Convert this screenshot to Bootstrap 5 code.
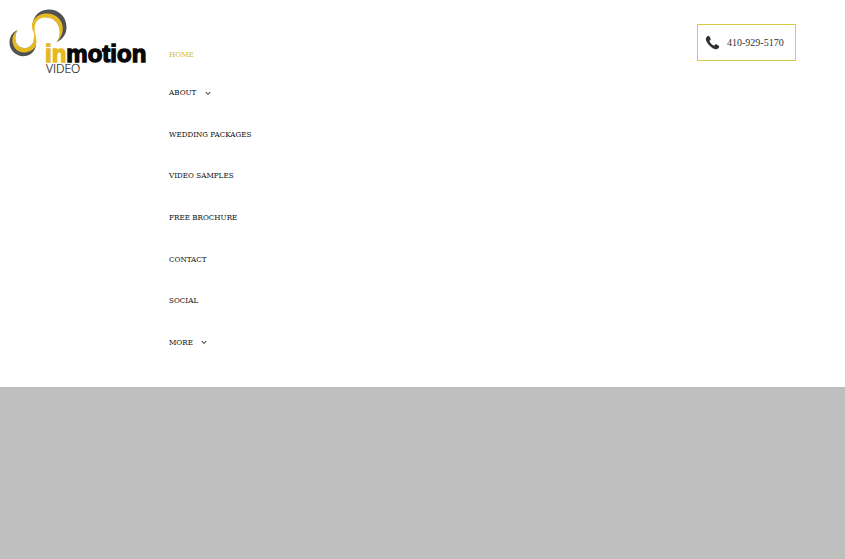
<!DOCTYPE html>
<html lang="en">
<head>
<meta charset="utf-8">
<meta name="viewport" content="width=device-width, initial-scale=1">
<title>Inmotion Video</title>
<link href="https://cdn.jsdelivr.net/npm/bootstrap@5.3.0/dist/css/bootstrap.min.css" rel="stylesheet">
<style>
  body { background: #bfbfbf; }
  .site-header { background: #fff; padding: 8px 0 25px 8px; box-shadow: 0 0 2px rgba(0, 0, 0, .6); }
  .brand-logo { width: 145px; height: 70px; }
  .brand-name { font: bold 24px "Liberation Sans", Arial, sans-serif; stroke-width: 1.3px; }
  .brand-sub { font: 300 12px "Open Sans", Arial, sans-serif; fill: #222; stroke: #222; stroke-width: .2px; }
  .site-menu { margin: 28px 0 0 16px; }
  .menu-list { min-height: 288px; }
  .menu-link { font: 8px/38px "DejaVu Serif Condensed", "DejaVu Serif", serif; color: #111; text-transform: uppercase; }
  .menu-link.active { color: #d3bd2e; }
  .menu-link svg { width: 6px; height: 5px; margin-left: 6px; }
  .phone-link { width: 99px; height: 37px; margin: 16px 49px 0 0; padding-left: 7px; gap: 7px; border: 1px solid #d9cb45; color: #333; font: 10px "Liberation Serif", serif; }
  .phone-link svg { width: 15px; height: 15px; }
</style>
</head>
<body>
<header class="site-header d-flex align-items-start">
  <a href="#" class="d-block flex-shrink-0" aria-label="Inmotion Video">
    <svg class="brand-logo d-block" viewBox="8 8 145 70">
      <path fill="#505153" d="M33 21C36 13 42 9.500 49 9.500C59 9.500 66.500 17 66.500 27C66.500 34 63 39 57 42L45 16Z"/>
      <path fill="#e5b91f" d="M33 21C37 15 42 13.500 47 13.500C56 13.500 62.500 20 62.800 28C63 34 60 39 57 42C59 38 60.500 34 59.500 29C57.500 22 53 17.500 46 17.500C38 17.500 34 24 34.500 34C32 30 31 25 33 21Z"/>
      <path fill="#fff" d="M34.500 28C35 21 39 17.500 46 17.500C53 17.500 57.500 22 59.500 29C60.500 34 59 38 57 42Z"/>
      <path fill="#505153" d="M18 30C12 32 9.500 37 9.500 43C9.500 50 16 56.200 23 56.200C30 56.200 35 52 36 45L16 35Z"/>
      <path fill="#e5b91f" d="M18 30C13.500 33 12 37 12.500 42C13.500 49 19 53 25 52.500C32 52 36.500 47 36.500 42C36.500 38 35 34 34.500 29C34 31 34.500 38 33 42C31.500 46 28 48 24.500 48C18 48 14.500 42 15.500 36C16 33 17 31 18 30Z"/>
      <path fill="#fff" d="M18 30C17 31 16 33 15.500 36C14.500 42 18 48 24.500 48C28 48 31.500 46 33 42Z"/>
      <text class="brand-name" x="45" y="62" fill="#e5b91f" stroke="#e5b91f">in<tspan fill="#080808" stroke="#080808">motion</tspan></text>
      <text class="brand-sub" x="46" y="73">VIDEO</text>
    </svg>
  </a>
  <nav class="site-menu" aria-label="Main">
    <a class="menu-link active d-block text-decoration-none" href="#" aria-current="page">Home</a>
    <div class="menu-list d-flex flex-column justify-content-between">
      <a class="menu-link text-decoration-none" href="#">About <svg viewBox="0 0 6 5" fill="none" stroke="currentColor"><path d="M.8 1L3 3.500L5.200 1"/></svg></a>
      <a class="menu-link text-decoration-none" href="#">Wedding Packages</a>
      <a class="menu-link text-decoration-none" href="#">Video Samples</a>
      <a class="menu-link text-decoration-none" href="#">Free Brochure</a>
      <a class="menu-link text-decoration-none" href="#">Contact</a>
      <a class="menu-link text-decoration-none" href="#">Social</a>
      <a class="menu-link text-decoration-none" href="#">More <svg viewBox="0 0 6 5" fill="none" stroke="currentColor"><path d="M.8 1L3 3.500L5.200 1"/></svg></a>
    </div>
  </nav>
  <a class="phone-link ms-auto d-flex align-items-center flex-shrink-0 text-decoration-none" href="tel:4109295170">
    <svg viewBox="0 0 15 15" fill="#303030" aria-hidden="true"><path d="M3.500 .8C4.300 .5 6 4 5.700 4.800C5.500 5.400 4.300 5.600 4.500 6.200C5.200 8 7.200 10 9 10.600C9.700 10.800 9.900 9.500 10.500 9.300C11.300 9 14.500 11 14.300 11.800C14 13 12.400 14.200 11.200 14.300C7 14.200 1 8 .8 4C.8 2.600 2.200 1.200 3.500 .8Z"/></svg>
    <span>410-929-5170</span>
  </a>
</header>
<script src="https://cdn.jsdelivr.net/npm/bootstrap@5.3.0/dist/js/bootstrap.bundle.min.js"></script>
</body>
</html>
